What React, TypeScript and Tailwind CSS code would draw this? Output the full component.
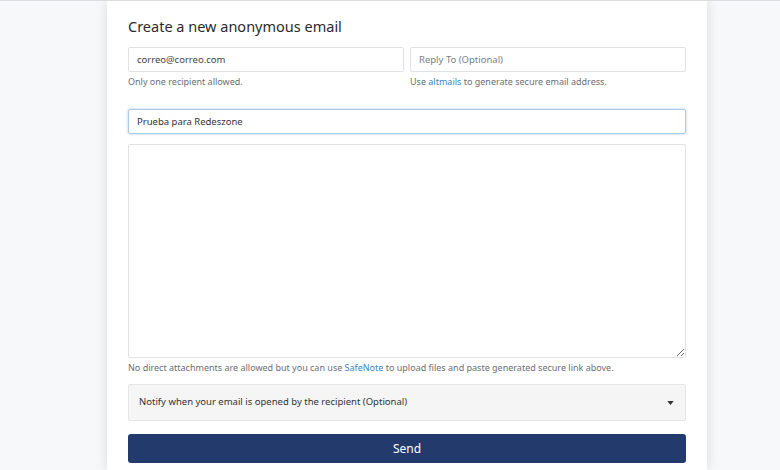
import React from 'react';

export default function App() {
  return (
    <div
      className="w-[780px] h-[470px] overflow-hidden bg-[#f7f8fa] border-t border-[#dcdde0] flex justify-center"
      style={{ fontFamily: '"Noto Sans", "Liberation Sans", sans-serif' }}
    >
      {/* Card */}
      <div className="w-[600px] ml-[34px] bg-white shadow-[0_0_12px_rgba(0,0,0,0.12)] px-[21px] pt-[15px] flex flex-col">
        <h1 className="text-[14.5px] leading-[20px] text-[#2b2b2b]">Create a new anonymous email</h1>

        <div className="mt-[9px] flex gap-[6px]">
          <div className="flex-1">
            <input
              defaultValue="correo@correo.com"
              className="w-full h-[25px] border border-[#dfe1e4] rounded-[2px] px-2 text-[9.5px] text-[#444] outline-none"
            />
            <p className="mt-[3px] text-[9px] leading-[14px] text-[#6b6f74]">Only one recipient allowed.</p>
          </div>
          <div className="flex-1">
            <input
              placeholder="Reply To (Optional)"
              className="w-full h-[25px] border border-[#dfe1e4] rounded-[2px] px-2 text-[9.5px] text-[#444] placeholder:text-[#7a7d82] outline-none"
            />
            <p className="mt-[3px] text-[9px] leading-[14px] text-[#6b6f74]">
              Use <span className="text-[#3a84c0]">altmails</span> to generate secure email address.
            </p>
          </div>
        </div>

        <input
          defaultValue="Prueba para Redeszone"
          className="mt-[20px] w-full h-[25px] border border-[#a9cbe6] shadow-[0_0_3px_rgba(120,170,215,0.6)] rounded-[2px] px-2 text-[9.5px] text-[#333] outline-none"
        />

        <textarea className="mt-[10px] w-full h-[214px] border border-[#dfe1e4] rounded-[2px] outline-none resize-y block" />

        <p className="mt-[3px] text-[9px] leading-[14px] text-[#6b6f74]">
          No direct attachments are allowed but you can use <span className="text-[#3a84c0]">SafeNote</span> to upload files and paste generated secure link above.
        </p>

        <div className="mt-[9px] h-[37px] bg-[#f5f5f5] border border-[#e6e6e6] rounded-[2px] flex items-center justify-between px-[10px]">
          <span className="text-[9.5px] text-[#333]">Notify when your email is opened by the recipient (Optional)</span>
          <svg width="7" height="4" viewBox="0 0 8 5" className="mr-[1px]">
            <path d="M0 0h8L4 5z" fill="#333" />
          </svg>
        </div>

        <button className="mt-[13px] h-[29px] w-full bg-[#233a6c] rounded-[3px] text-white text-[12px]">Send</button>
      </div>
    </div>
  );
}
